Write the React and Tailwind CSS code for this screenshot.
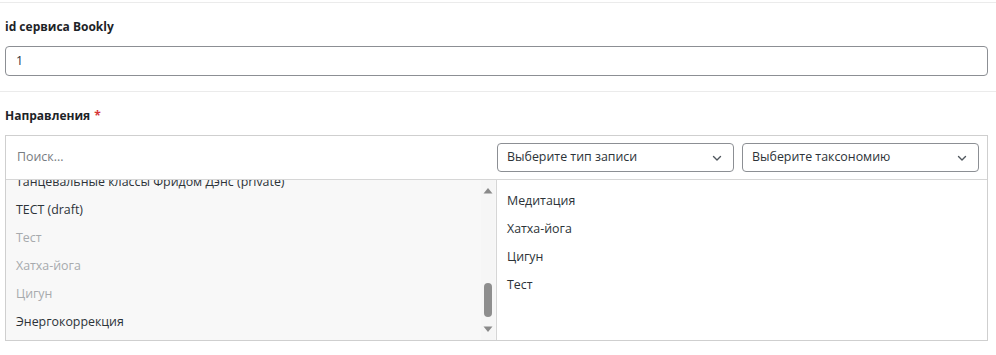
import React from "react";

const font = { fontFamily: '"Open Sans", "Noto Sans", sans-serif' };

function Chevron() {
  return (
    <svg width="12" height="12" viewBox="0 0 12 12" className="text-[#50575e]">
      <path d="M2.5 4.5 L6 8 L9.5 4.5" fill="none" stroke="currentColor" strokeWidth="1.4" strokeLinecap="round" strokeLinejoin="round" />
    </svg>
  );
}

function Select({ label }) {
  return (
    <div className="flex h-[29px] w-[237px] items-center justify-between rounded-[4px] border border-[#8c8f94] bg-white pl-[9px] pr-[10px] text-[12.4px] text-[#2c3338]">
      <span>{label}</span>
      <Chevron />
    </div>
  );
}

export default function App() {
  const left = [
    { t: "Танцевальные классы Фридом Дэнс (private)", d: false },
    { t: "ТЕСТ (draft)", d: false },
    { t: "Тест", d: true },
    { t: "Хатха-йога", d: true },
    { t: "Цигун", d: true },
    { t: "Энергокоррекция", d: false },
  ];
  const right = ["Медитация", "Хатха-йога", "Цигун", "Тест"];
  return (
    <div className="h-[355px] w-[996px] bg-white" style={font}>
      <div className="pt-[2px]">
        <div className="border-t border-[#ebebeb]" />
        <div className="pl-[5px] pr-[8px]">
          <div className="mt-[16px] mb-[11px] h-[16px] text-[12px] font-bold leading-[16px] text-[#1d2327]">id сервиса Bookly</div>
          <div className="flex h-[30px] items-center rounded-[4px] border border-[#8c8f94] pl-[10px] text-[12.4px] text-[#2c3338]">1</div>
        </div>
        <div className="mt-[15px] border-t border-[#ebebeb]" />
        <div className="pl-[5px] pr-[8px]">
          <div className="flex h-[32px] items-end text-[12px] font-bold leading-[16px] text-[#1d2327]">
            Направления<span className="ml-[4px] text-[#d63638]">*</span>
          </div>
          <div className="mt-[11px] border border-[#cfcfcf]">
            <div className="flex h-[44px] items-center border-b border-[#d6d6d6]">
              <div className="flex-1 pl-[11px] text-[12.4px] text-[#787c82]">Поиск...</div>
              <div className="flex gap-[8px] pr-[8px]">
                <Select label="Выберите тип записи" />
                <Select label="Выберите таксономию" />
              </div>
            </div>
            <div className="flex h-[160px]">
              <div className="flex w-[491px] border-r border-[#d6d6d6] bg-[#f8f8f8]">
                <div className="flex-1 overflow-hidden">
                  <div className="-mt-[12px]">
                    {left.map((it, i) => (
                      <div
                        key={i}
                        className={`flex h-[28px] items-center pl-[10px] text-[12.4px] ${it.d ? "text-[#a7aaad]" : "text-[#2c3338]"}`}
                      >
                        {it.t}
                      </div>
                    ))}
                  </div>
                </div>
                <div className="mr-[1px] flex w-[14px] flex-col items-center bg-[#f6f6f6] pt-[7px] pb-[7px]">
                  <svg width="10" height="7" viewBox="0 0 10 7"><path d="M0.5 6.5 L5 1 L9.5 6.5 Z" fill="#8a8a8a" /></svg>
                  <div className="flex-1" />
                  <div className="h-[34px] w-[8px] rounded-full bg-[#8e8e8e]" />
                  <div className="h-[9px]" />
                  <svg width="10" height="7" viewBox="0 0 10 7"><path d="M0.5 0.5 L5 6 L9.5 0.5 Z" fill="#8a8a8a" /></svg>
                </div>
              </div>
              <div className="flex-1 bg-white pt-[7px]">
                {right.map((t, i) => (
                  <div key={i} className="flex h-[28px] items-center pl-[10px] text-[12.4px] text-[#2c3338]">
                    {t}
                  </div>
                ))}
              </div>
            </div>
          </div>
        </div>
      </div>
    </div>
  );
}
